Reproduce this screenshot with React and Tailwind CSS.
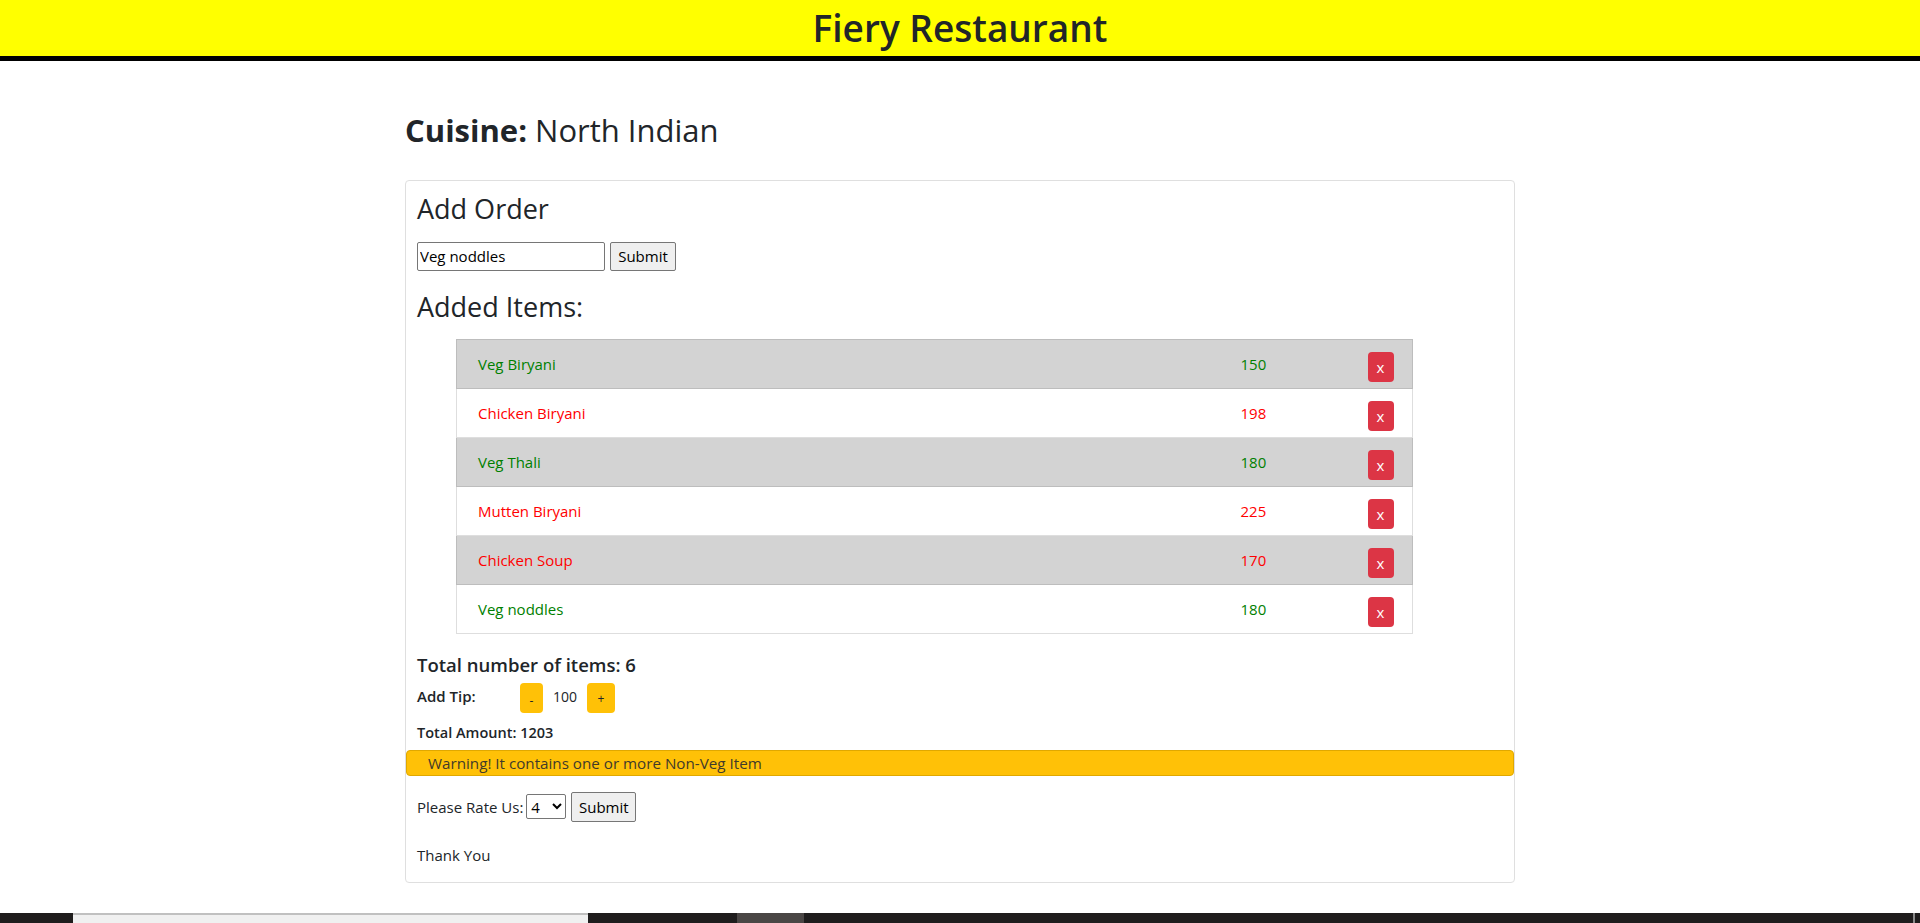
import React, { useState } from "react";

const items = [
  { name: "Veg Biryani", price: 150, veg: true },
  { name: "Chicken Biryani", price: 198, veg: false },
  { name: "Veg Thali", price: 180, veg: true },
  { name: "Mutten Biryani", price: 225, veg: false },
  { name: "Chicken Soup", price: 170, veg: false },
  { name: "Veg noddles", price: 180, veg: true },
];

function ItemRow({ item, index }) {
  const striped = index % 2 === 0;
  const color = item.veg ? "text-[#008000]" : "text-[#ff0000]";
  return (
    <tr className={striped ? "h-[49px] border border-[#bdbdbd] bg-[#d3d3d3]" : "h-[49px] border border-[#dedede] bg-white"}>
      <td className={`w-[763px] pl-[21px] align-middle text-[15px] ${color}`}>{item.name}</td>
      <td className={`w-[127px] pl-[21px] align-middle text-[15px] ${color}`}>{item.price}</td>
      <td className="pl-[21px] pt-[7px] align-middle">
        <button className="flex h-[30px] w-[26px] items-center justify-center rounded-[4px] bg-[#dc3545] text-[15px] text-white">
          x
        </button>
      </td>
    </tr>
  );
}

export default function App() {
  const [order, setOrder] = useState("Veg noddles");
  const [tip, setTip] = useState(100);
  const [rating, setRating] = useState("4");
  const hasNonVeg = items.some((item) => !item.veg);
  const total = items.reduce((sum, item) => sum + item.price, 0) + tip;

  return (
    <div className="flex min-h-screen flex-col bg-white font-['Open_Sans',sans-serif] text-[15px] text-[#212529]">
      <header className="flex h-[61px] items-center justify-center border-b-[5px] border-black bg-[#ffff00] pb-[2px]">
        <h1 className="text-[37px] font-semibold leading-none text-[#212529]">Fiery Restaurant</h1>
      </header>

      <main className="mx-auto w-[1110px]">
        <h2 className="mt-[51px] text-[31px] font-medium leading-[1.2]">
          <span className="font-bold">Cuisine:</span> North Indian
        </h2>

        <div className="mt-[31px] rounded-[4px] border border-[#dfdfdf] pb-[16px]">
          <div className="px-[11px]">
            <h3 className="mt-[12px] text-[27px] font-medium leading-[1.2]">Add Order</h3>
            <form className="mt-[16px] flex gap-[5px]" onSubmit={(event) => event.preventDefault()}>
              <input
                className="h-[29px] w-[188px] rounded-[2px] border border-[#767676] px-[2px] text-[15px] text-black"
                value={order}
                onChange={(event) => setOrder(event.target.value)}
              />
              <button className="h-[29px] w-[66px] rounded-[2px] border border-[#767676] bg-[#efefef] text-[15px] text-black" type="submit">
                Submit
              </button>
            </form>
            <h3 className="mt-[20px] text-[27px] font-medium leading-[1.2]">Added Items:</h3>

            <table className="ml-[39px] mt-[16px] w-[957px] border-collapse">
              <tbody>
                {items.map((item, index) => (
                  <ItemRow key={item.name} item={item} index={index} />
                ))}
              </tbody>
            </table>

            <h5 className="mt-[20px] text-[18.5px] font-semibold leading-[1.2]">Total number of items: {items.length}</h5>
            <div className="mt-[7px] flex items-start">
              <span className="mt-[2px] w-[103px] text-[15px] font-semibold">Add Tip:</span>
              <button
                className="h-[30px] w-[23px] rounded-[4px] bg-[#ffc107] pt-[6px] text-[12px] leading-none"
                onClick={() => setTip(tip - 10)}
              >
                -
              </button>
              <span className="mx-[10px] mt-[3px] text-[14px] font-medium">{tip}</span>
              <button
                className="h-[30px] w-[28px] rounded-[4px] bg-[#ffc107] pt-[2px] text-[12px] leading-none"
                onClick={() => setTip(tip + 10)}
              >
                +
              </button>
            </div>
            <p className="mt-[9px] text-[14.5px] font-semibold">Total Amount: {total}</p>
          </div>

          {hasNonVeg ? (
            <div className="mt-[6px] flex h-[26px] items-center rounded-[4px] border border-[#e0a800] bg-[#ffc107] pl-[21px] text-[15.2px] text-[#3f3a2b]">
              Warning! It contains one or more Non-Veg Item
            </div>
          ) : null}

          <div className="px-[11px]">
            <div className="mt-[16px] flex items-center">
              <span>Please Rate Us:</span>
              <select
                className="ml-[3px] h-[25px] w-[40px] rounded-[2px] border border-[#767676] bg-white text-[15px] text-black"
                value={rating}
                onChange={(event) => setRating(event.target.value)}
              >
                {["1", "2", "3", "4", "5"].map((value) => (
                  <option key={value} value={value}>
                    {value}
                  </option>
                ))}
              </select>
              <button className="ml-[5px] h-[30px] w-[65px] rounded-[2px] border border-[#767676] bg-[#efefef] text-[15px] text-black">
                Submit
              </button>
            </div>
            <p className="mt-[22px]">Thank You</p>
          </div>
        </div>
      </main>

      <div className="mt-auto flex h-[10px] bg-[#1f1d1d]">
        <div className="ml-[73px] w-[515px] border-t-2 border-[#c0c0c0] bg-[#f0f0f0]" />
        <div className="ml-[149px] w-[67px] bg-[#4a4645]" />
        <div className="ml-auto mr-[5px] w-[2px] bg-[#8a8a8a]" />
      </div>
    </div>
  );
}
